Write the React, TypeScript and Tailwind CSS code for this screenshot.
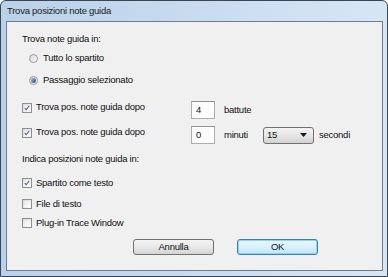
import React from "react";

const font = { fontFamily: '"Liberation Sans", Arial, sans-serif' };

function CheckBox({ checked }: { checked?: boolean }) {
  return (
    <div className="w-[10px] h-[10px] shrink-0 border border-[#8f8f8f] bg-gradient-to-br from-[#dcdcdc] to-[#fbfbfb] p-[1px]">
      <div className="w-full h-full bg-gradient-to-br from-[#e6e6e6] to-[#ffffff] flex items-center justify-center">
        {checked && (
          <svg width="8" height="8" viewBox="0 0 8 8">
            <path d="M1 4.2 L3 6.3 L7 1" stroke="#4a5f97" strokeWidth="1.4" fill="none" />
          </svg>
        )}
      </div>
    </div>
  );
}

function Radio({ checked }: { checked?: boolean }) {
  return (
    <div className="w-[9px] h-[9px] shrink-0 rounded-full border border-[#9a9a9a] bg-gradient-to-br from-[#d8d8d8] to-[#fafafa] flex items-center justify-center">
      {checked && <div className="w-[5px] h-[5px] rounded-full bg-gradient-to-br from-[#8ac2e6] to-[#16508a]" />}
    </div>
  );
}

function Row({ children, className = "" }: { children: React.ReactNode; className?: string }) {
  return <div className={"flex items-center h-[14px] " + className}>{children}</div>;
}

export default function App() {
  return (
    <div
      style={font}
      className="w-[388px] h-[277px] box-border border border-[#3b4652] rounded-t-[6px] bg-gradient-to-r from-[#b9d1ea] via-[#c8dbef] to-[#d7e6f5] text-[9.5px] tracking-[-0.25px] text-[#111]"
    >
      <div className="h-[20px] pl-[6px] flex items-center text-[9.5px] text-[#1a1a1a]">
        Trova posizioni note guida
      </div>
      <div className="ml-[5px] w-[377px] h-[250px] box-border border border-[#6d7c8e] bg-[#f0f0f0] flex flex-col pl-[15px]">
        <Row className="mt-[10px]">Trova note guida in:</Row>
        <Row className="mt-[5px]">
          <div className="ml-[7px]"><Radio /></div>
          <span className="ml-[5px]">Tutto lo spartito</span>
        </Row>
        <Row className="mt-[8px]">
          <div className="ml-[7px]"><Radio checked /></div>
          <span className="ml-[5px]">Passaggio selezionato</span>
        </Row>

        <div className="mt-[14px] h-[18px] flex items-center">
          <div className="w-[169px] flex items-center gap-[4px] pb-[5px]">
            <CheckBox checked />
            <span>Trova pos. note guida dopo</span>
          </div>
          <div className="w-[24px] h-[18px] box-border border border-[#abadb3] border-t-[#8e9094] bg-white pl-[4px] flex items-center">4</div>
          <span className="ml-[9px]">battute</span>
        </div>

        <div className="mt-[7px] h-[18px] flex items-center">
          <div className="w-[169px] flex items-center gap-[4px] pb-[5px]">
            <CheckBox checked />
            <span>Trova pos. note guida dopo</span>
          </div>
          <div className="w-[24px] h-[18px] box-border border border-[#abadb3] border-t-[#8e9094] bg-white pl-[4px] flex items-center">0</div>
          <span className="ml-[9px] w-[39px]">minuti</span>
          <div className="w-[51px] h-[17px] box-border border border-[#707070] rounded-[3px] bg-gradient-to-b from-[#f2f2f2] via-[#e6e6e6] to-[#d2d2d2] flex items-center pl-[3px] pr-[6px]">
            <span className="flex-1">15</span>
            <svg width="7" height="4" viewBox="0 0 7 4">
              <path d="M0 0 H7 L3.5 4 Z" fill="#1a1a1a" />
            </svg>
          </div>
          <span className="ml-[5px]">secondi</span>
        </div>

        <Row className="mt-[8px]">Indica posizioni note guida in:</Row>
        <Row className="mt-[10px] gap-[4px]">
          <CheckBox checked />
          <span>Spartito come testo</span>
        </Row>
        <Row className="mt-[7px] gap-[4px]">
          <CheckBox />
          <span>File di testo</span>
        </Row>
        <Row className="mt-[5px] gap-[4px]">
          <CheckBox />
          <span>Plug-in Trace Window</span>
        </Row>

        <div className="mt-[9px] ml-[111px] flex gap-[23px]">
          <button className="w-[81px] h-[16px] box-border border border-[#707070] rounded-[3px] bg-gradient-to-b from-[#f3f3f3] via-[#e8e8e8] to-[#d4d4d4] text-[9.5px] leading-none">
            Annulla
          </button>
          <button className="w-[81px] h-[16px] box-border border border-[#3c7fb1] rounded-[3px] bg-gradient-to-b from-[#eaf6fd] via-[#d9f0fc] to-[#bee6fd] shadow-[inset_0_0_0_1px_#8ed4f5] text-[9.5px] leading-none">
            OK
          </button>
        </div>
      </div>
    </div>
  );
}
